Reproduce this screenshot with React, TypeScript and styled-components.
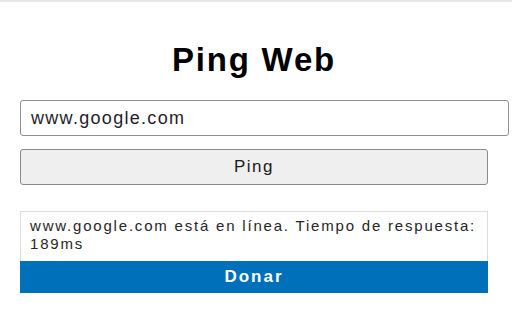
import React, { useState } from "react";
import styled, { createGlobalStyle } from "styled-components";

const GlobalStyle = createGlobalStyle`
  html, body {
    margin: 0;
    padding: 0;
    background: #ffffff;
  }
  body {
    border-top: 2px solid #e6e6e6;
    font-family: "Liberation Sans", Arial, sans-serif;
  }
`;

/**
 * Ping Web popup
 */
const App = () => {
  // Host typed by the user
  const [host, setHost] = useState<string>("www.google.com");
  // Last ping result message
  const [result] = useState<string>(
    "www.google.com está en línea. Tiempo de respuesta: 189ms"
  );

  return (
    <>
      <GlobalStyle />
      <StyledPage>
        <StyledTitle>Ping Web</StyledTitle>

        {/* Start host form */}
        <StyledHostInput
          type="text"
          value={host}
          onChange={(e) => setHost(e.target.value)}
        />
        <StyledPingButton type="button">Ping</StyledPingButton>
        {/* End host form */}

        {/* Start result card */}
        <StyledResultCard>
          <StyledResultText>{result}</StyledResultText>
          <StyledDonateButton type="button">Donar</StyledDonateButton>
        </StyledResultCard>
        {/* End result card */}
      </StyledPage>
    </>
  );
};

export default App;

// ========= Start Styled Elements ==========
const StyledPage = styled.div`
  display: flex;
  flex-direction: column;
  width: 468px;
  padding: 40px 0 0 20px;
`;

const StyledTitle = styled.h1`
  margin: 0 0 22px;
  font-size: 33px;
  line-height: 36px;
  font-weight: 700;
  letter-spacing: 1.8px;
  text-align: center;
  color: #000000;
`;

const StyledHostInput = styled.input`
  box-sizing: border-box;
  width: 489px;
  height: 36px;
  margin: 0;
  padding: 0 10px;
  border: 1px solid #8f8f8f;
  border-radius: 3px;
  font-family: "Liberation Sans", Arial, sans-serif;
  font-size: 18px;
  letter-spacing: 1.3px;
  color: #1e1e2a;
  background: #ffffff;
  outline: none;
`;

const StyledPingButton = styled.button`
  box-sizing: border-box;
  width: 468px;
  height: 36px;
  margin: 13px 0 0;
  padding: 0;
  border: 1px solid #8a8a8a;
  border-radius: 3px;
  background: #efefef;
  font-family: "Liberation Sans", Arial, sans-serif;
  font-size: 17px;
  letter-spacing: 1.5px;
  color: #1a1a1a;
  cursor: pointer;
`;

const StyledResultCard = styled.div`
  display: flex;
  flex-direction: column;
  width: 468px;
  margin-top: 26px;
`;

const StyledResultText = styled.div`
  box-sizing: border-box;
  height: 50px;
  padding: 5px 6px 0 9px;
  border: 1px solid #dddddd;
  border-bottom: none;
  font-size: 15px;
  line-height: 18px;
  letter-spacing: 1.8px;
  color: #262626;
`;

const StyledDonateButton = styled.button`
  height: 32px;
  margin: 0;
  padding: 0;
  border: none;
  background: #0070ba;
  font-family: "Liberation Sans", Arial, sans-serif;
  font-size: 17px;
  font-weight: 700;
  letter-spacing: 2px;
  color: #ffffff;
  cursor: pointer;
`;
// ========= End Styled Elements ==========
